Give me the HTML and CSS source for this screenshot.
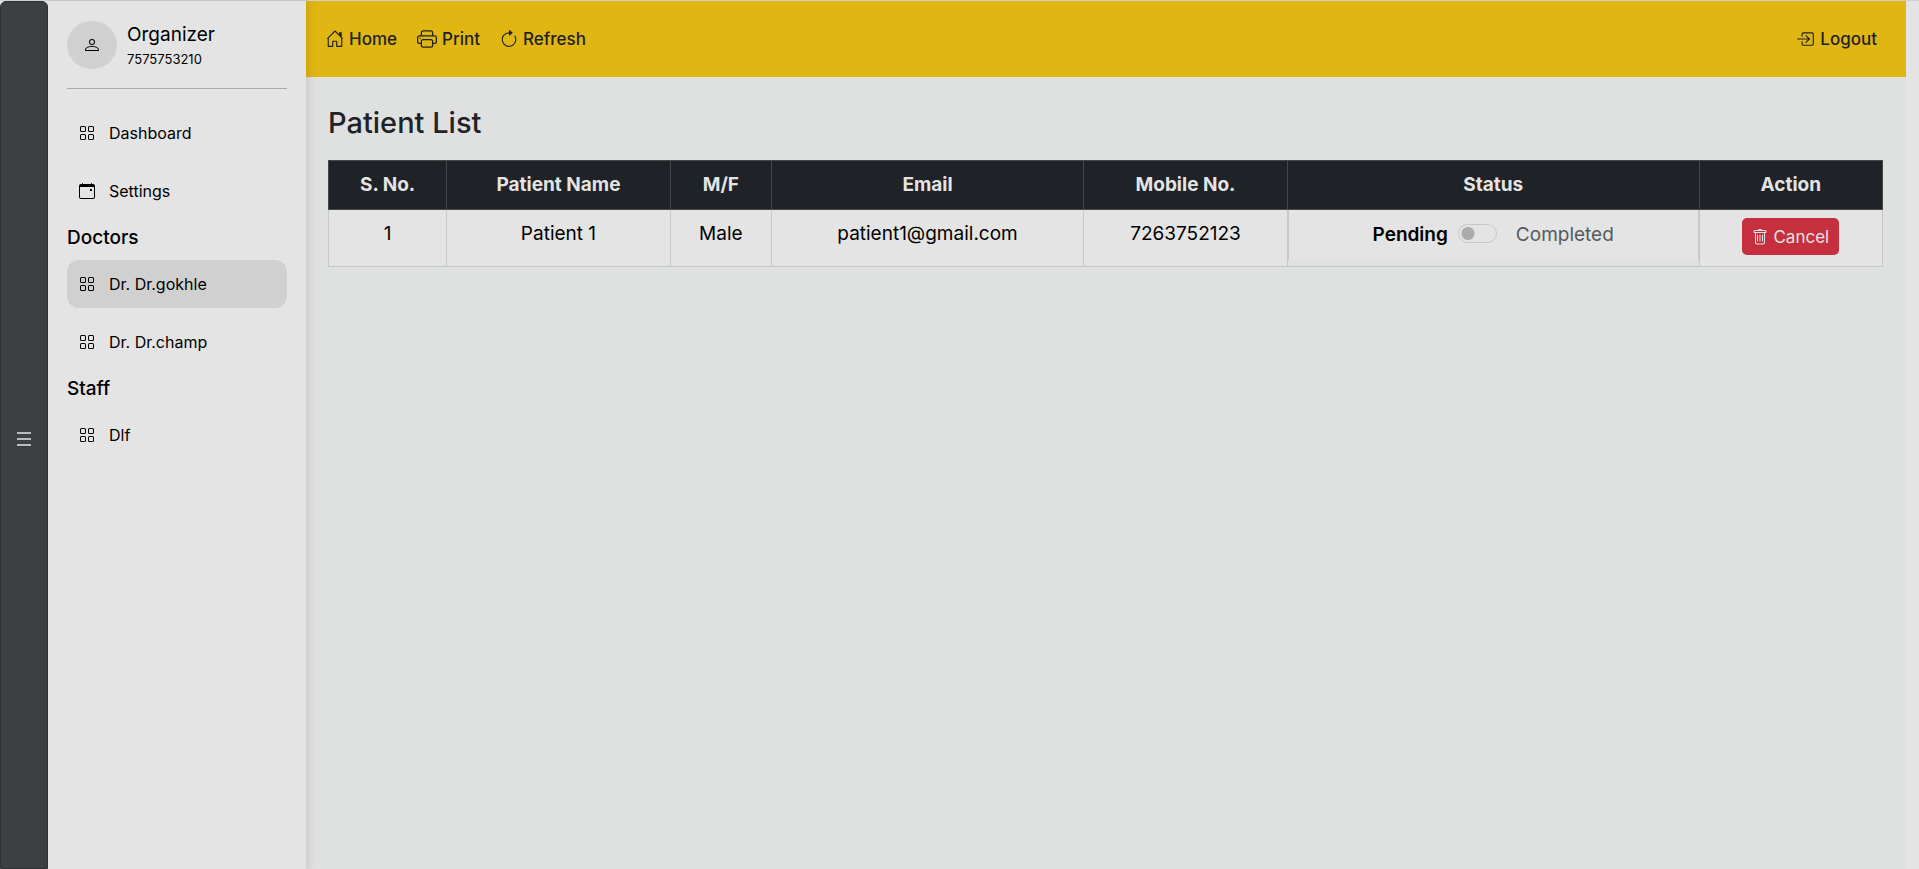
FILE: index.html
```html
<!DOCTYPE html>
<html lang="en">
<head>
    <meta charset="UTF-8">
    <meta name="viewport" content="width=device-width, initial-scale=1">
    <title>Patient List</title>
    <link rel="stylesheet" href="styles.css">
</head>
<body>
    <!-- shared icons -->
    <svg class="sprite" aria-hidden="true">
        <symbol id="icon-grid" viewBox="0 0 16 16">
            <path d="M1 2.5A1.5 1.5 0 0 1 2.5 1h3A1.5 1.5 0 0 1 7 2.5v3A1.5 1.5 0 0 1 5.5 7h-3A1.5 1.5 0 0 1 1 5.5zM2.5 2a.5.5 0 0 0-.5.5v3a.5.5 0 0 0 .5.5h3a.5.5 0 0 0 .5-.5v-3a.5.5 0 0 0-.5-.5zm6.5.5A1.5 1.5 0 0 1 10.5 1h3A1.5 1.5 0 0 1 15 2.5v3A1.5 1.5 0 0 1 13.5 7h-3A1.5 1.5 0 0 1 9 5.5zm1.5-.5a.5.5 0 0 0-.5.5v3a.5.5 0 0 0 .5.5h3a.5.5 0 0 0 .5-.5v-3a.5.5 0 0 0-.5-.5zM1 10.5A1.5 1.5 0 0 1 2.5 9h3A1.5 1.5 0 0 1 7 10.5v3A1.5 1.5 0 0 1 5.5 15h-3A1.5 1.5 0 0 1 1 13.5zm1.5-.5a.5.5 0 0 0-.5.5v3a.5.5 0 0 0 .5.5h3a.5.5 0 0 0 .5-.5v-3a.5.5 0 0 0-.5-.5zm6.5.5A1.5 1.5 0 0 1 10.5 9h3a1.5 1.5 0 0 1 1.5 1.5v3a1.5 1.5 0 0 1-1.5 1.5h-3A1.5 1.5 0 0 1 9 13.5zm1.5-.5a.5.5 0 0 0-.5.5v3a.5.5 0 0 0 .5.5h3a.5.5 0 0 0 .5-.5v-3a.5.5 0 0 0-.5-.5z"/>
        </symbol>
    </svg>

    <div class="wrapper">
        <button class="menu-toggle" type="button" aria-label="Toggle menu">
            <svg class="icon-menu" viewBox="0 0 16 16"><path d="M1 2h14M1 8h14M1 14h14"/></svg>
        </button>

        <aside class="sidebar">
            <div class="profile">
                <div class="avatar">
                    <svg class="icon" viewBox="0 0 16 16"><path d="M8 8a3 3 0 1 0 0-6 3 3 0 0 0 0 6m2-3a2 2 0 1 1-4 0 2 2 0 0 1 4 0m5 8c0 1-1 1-1 1H2s-1 0-1-1 1-4 7-4 7 3 7 4m-1-.004c-.001-.246-.154-.986-.832-1.664C12.516 10.68 11.289 10 8 10s-4.516.68-5.168 1.332c-.678.678-.83 1.418-.832 1.664z"/></svg>
                </div>
                <div>
                    <div class="profile-name">Organizer</div>
                    <div class="profile-phone">7575753210</div>
                </div>
            </div>
            <nav class="side-nav">
                <a class="side-link" href="#"><svg class="icon"><use href="#icon-grid"/></svg>Dashboard</a>
                <a class="side-link" href="#">
                    <svg class="icon" viewBox="0 0 16 16"><path d="M11 6.5a.5.5 0 0 1 .5-.5h1a.5.5 0 0 1 .5.5v1a.5.5 0 0 1-.5.5h-1a.5.5 0 0 1-.5-.5z"/><path d="M3.5 0a.5.5 0 0 1 .5.5V1h8V.5a.5.5 0 0 1 1 0V1h1a2 2 0 0 1 2 2v11a2 2 0 0 1-2 2H2a2 2 0 0 1-2-2V3a2 2 0 0 1 2-2h1V.5a.5.5 0 0 1 .5-.5M1 4v10a1 1 0 0 0 1 1h12a1 1 0 0 0 1-1V4z"/></svg>Settings
                </a>
                <h6>Doctors</h6>
                <a class="side-link active" href="#"><svg class="icon"><use href="#icon-grid"/></svg>Dr. Dr.gokhle</a>
                <a class="side-link" href="#"><svg class="icon"><use href="#icon-grid"/></svg>Dr. Dr.champ</a>
                <h6>Staff</h6>
                <a class="side-link" href="#"><svg class="icon"><use href="#icon-grid"/></svg>Dlf</a>
            </nav>
        </aside>

        <main class="main">
            <header class="topbar">
                <a class="top-link" href="#">
                    <svg class="icon-top" viewBox="0 0 16 16"><path d="M1.5 7.4 8 .9l6.5 6.5M2 7v7.500h4V10h3.500v4.500H14V7" fill="none" stroke="currentColor" stroke-linejoin="round" stroke-linecap="round"/><path d="M11.500 2H14v4.500l-2.500-2.500z"/></svg>Home
                </a>
                <a class="top-link" href="#">
                    <svg class="icon-top wide" viewBox="0 0 16 16"><path d="M2.5 8a.5.5 0 1 0 0-1 .5.5 0 0 0 0 1"/><path d="M5 1a2 2 0 0 0-2 2v2H2a2 2 0 0 0-2 2v3a2 2 0 0 0 2 2h1v1a2 2 0 0 0 2 2h6a2 2 0 0 0 2-2v-1h1a2 2 0 0 0 2-2V7a2 2 0 0 0-2-2h-1V3a2 2 0 0 0-2-2zM4 3a1 1 0 0 1 1-1h6a1 1 0 0 1 1 1v2H4zm1 5a2 2 0 0 0-2 2v1H2a1 1 0 0 1-1-1V7a1 1 0 0 1 1-1h12a1 1 0 0 1 1 1v3a1 1 0 0 1-1 1h-1v-1a2 2 0 0 0-2-2zm7 2v3a1 1 0 0 1-1 1H5a1 1 0 0 1-1-1v-3a1 1 0 0 1 1-1h6a1 1 0 0 1 1 1"/></svg>Print
                </a>
                <a class="top-link" href="#">
                    <svg class="icon-top" viewBox="0 0 16 16"><path d="M8 2.500a6 6 0 1 0 5.200 3" fill="none" stroke="currentColor" stroke-linecap="round"/><path d="M8 4.866V.134a.25.25 0 0 1 .41-.192l2.760 2.366c.12.1.12.284 0 .384L8.410 5.058A.25.25 0 0 1 8 4.866"/></svg>Refresh
                </a>
                <a class="top-link logout" href="#">
                    <svg class="icon-top" viewBox="0 0 16 16"><path d="M4.5 5.5V3.500a1 1 0 0 1 1-1h8a1 1 0 0 1 1 1v9a1 1 0 0 1-1 1h-8a1 1 0 0 1-1-1v-2M.5 8H11M8 5l3 3-3 3" fill="none" stroke="currentColor" stroke-linecap="round" stroke-linejoin="round"/></svg>Logout
                </a>
            </header>

            <section class="content">
                <h2>Patient List</h2>
                <table class="patients">
                    <colgroup>
                        <col class="col-no"><col class="col-name"><col class="col-sex"><col class="col-email"><col class="col-mobile"><col class="col-status"><col class="col-action">
                    </colgroup>
                    <thead>
                        <tr>
                            <th>S. No.</th>
                            <th>Patient Name</th>
                            <th>M/F</th>
                            <th>Email</th>
                            <th>Mobile No.</th>
                            <th>Status</th>
                            <th>Action</th>
                        </tr>
                    </thead>
                    <tbody>
                        <tr>
                            <td>1</td>
                            <td>Patient 1</td>
                            <td>Male</td>
                            <td>patient1@gmail.com</td>
                            <td>7263752123</td>
                            <td class="status-cell">
                                <div class="status">
                                    <label class="pending" for="status1">Pending</label>
                                    <input class="switch" type="checkbox" role="switch" id="status1">
                                    <label class="completed" for="status1">Completed</label>
                                </div>
                            </td>
                            <td>
                                <button class="btn-cancel" type="button">
                                    <svg class="icon" viewBox="0 0 16 16"><path d="M5.5 5.5A.5.5 0 0 1 6 6v6a.5.5 0 0 1-1 0V6a.5.5 0 0 1 .5-.5m2.5 0a.5.5 0 0 1 .5.5v6a.5.5 0 0 1-1 0V6a.5.5 0 0 1 .5-.5m3 .5a.5.5 0 0 0-1 0v6a.5.5 0 0 0 1 0z"/><path d="M14.500 3a1 1 0 0 1-1 1H13v9.500a2 2 0 0 1-2 2H5a2 2 0 0 1-2-2V4h-.5a1 1 0 0 1-1-1V2a1 1 0 0 1 1-1H6a1 1 0 0 1 1-1h2a1 1 0 0 1 1 1h3.500a1 1 0 0 1 1 1zM4 4v9.500a1 1 0 0 0 1 1h6a1 1 0 0 0 1-1V4zM2.500 3h11V2h-11z"/></svg>Cancel
                                </button>
                            </td>
                        </tr>
                    </tbody>
                </table>
            </section>
        </main>
    </div>
</body>
</html>
```

FILE: styles.css
```css
:root {
    --panel: #e4e4e4;
    --page: #dfe1e0;
    --dark: #1f2226;
    --active: #d0d0d0;
    --yellow: #e0b612;
    --line: #c5c8cc;
}
* {
    box-sizing: border-box;
}
body {
    margin: 0;
    font-family: Inter, "Liberation Sans", sans-serif;
    font-size: 16px;
    color: #000;
    background: var(--panel);
}
a {
    color: inherit;
    text-decoration: none;
}
svg {
    fill: currentColor;
}
.sprite {
    display: none;
}
.icon {
    width: 16px;
    height: 16px;
    flex: none;
}
.wrapper {
    display: flex;
    min-height: 100vh;
    padding-right: 13px;
    border-top: 1px solid #d0d0d0;
}

/* menu strip */
.menu-toggle {
    width: 48px;
    padding: 10px 0 0;
    border: 1px solid #303336;
    border-radius: 6px 6px 0 0;
    background: #3c4043;
    color: var(--panel);
    cursor: pointer;
}
.icon-menu {
    width: 16px;
    height: 16px;
    stroke: currentColor;
    stroke-width: 1.5;
}

/* sidebar */
.sidebar {
    position: relative;
    width: 258px;
    padding: 20px 19px;
    background: var(--panel);
    box-shadow: 2px 0 8px rgba(0, 0, 0, 0.12);
}
.profile {
    display: flex;
    align-items: center;
    gap: 10px;
    padding-bottom: 19px;
    border-bottom: 1px solid #a9a9a9;
}
.avatar {
    display: flex;
    align-items: center;
    justify-content: center;
    width: 50px;
    height: 48px;
    border-radius: 50%;
    background: var(--active);
}
.profile-name {
    font-size: 19px;
    line-height: 28px;
}
.profile-phone {
    font-size: 13px;
    line-height: 20px;
}
.side-nav {
    padding-top: 20px;
}
.side-link {
    display: flex;
    align-items: center;
    gap: 14px;
    height: 48px;
    padding: 0 12px;
    border-radius: 12px;
}
.side-link.active {
    background: var(--active);
}
.side-link + .side-link {
    margin-top: 10px;
}
h6 {
    margin: 0;
    font-size: 19px;
    font-weight: 500;
    line-height: 45px;
}

/* main area */
.main {
    flex: 1;
    background: var(--page);
}
.topbar {
    display: flex;
    align-items: center;
    gap: 20px;
    height: 76px;
    padding: 0 29px 0 20px;
    background: var(--yellow);
    color: var(--dark);
    font-size: 17px;
    font-weight: 500;
}
.top-link {
    display: flex;
    align-items: center;
    gap: 5px;
}
.logout {
    margin-left: auto;
}
.icon-top {
    width: 18px;
    height: 18px;
}
.icon-top.wide {
    width: 20px;
    height: 20px;
}
.content {
    padding: 28px 23px 28px 22px;
}
h2 {
    margin: 0 0 20px;
    color: var(--dark);
    font-size: 29px;
    font-weight: 500;
    line-height: 35px;
}

/* table */
.patients {
    width: 100%;
    table-layout: fixed;
    border-collapse: collapse;
    background: var(--panel);
    font-size: 19px;
    line-height: 32px;
    text-align: center;
}
.col-no { width: 7.6%; }
.col-name { width: 14.4%; }
.col-sex { width: 6.5%; }
.col-email { width: 20.1%; }
.col-mobile { width: 13.1%; }
.col-status { width: 26.5%; }
.col-action { width: 11.8%; }
.patients th {
    padding: 8px;
    border: 1px solid #44484b;
    background: var(--dark);
    color: var(--panel);
    font-weight: 700;
}
.patients td {
    height: 57px;
    padding: 8px;
    border: 1px solid var(--line);
    vertical-align: top;
}
.patients .status-cell {
    padding: 0;
    background: var(--page);
}
.status {
    display: flex;
    align-items: center;
    justify-content: center;
    height: 50px;
    border: solid var(--line);
    border-width: 0 1px;
    background: var(--panel);
}
.pending {
    font-weight: 600;
}
.completed {
    color: #565a5e;
}
.switch {
    appearance: none;
    width: 39px;
    height: 19px;
    margin: 0 19px 4px 10px;
    border: 1px solid var(--line);
    border-radius: 10px;
    background: radial-gradient(circle at 9px 50%, #ababab 6px, transparent 7px);
}
.switch:checked {
    background: radial-gradient(circle at 28px 50%, #ababab 6px, transparent 7px);
}
.btn-cancel {
    display: inline-flex;
    align-items: center;
    gap: 5px;
    height: 37px;
    padding: 0 10px;
    border: 0;
    border-radius: 5px;
    background: #c6303e;
    color: var(--panel);
    font-family: inherit;
    font-size: 17px;
    cursor: pointer;
}
```
